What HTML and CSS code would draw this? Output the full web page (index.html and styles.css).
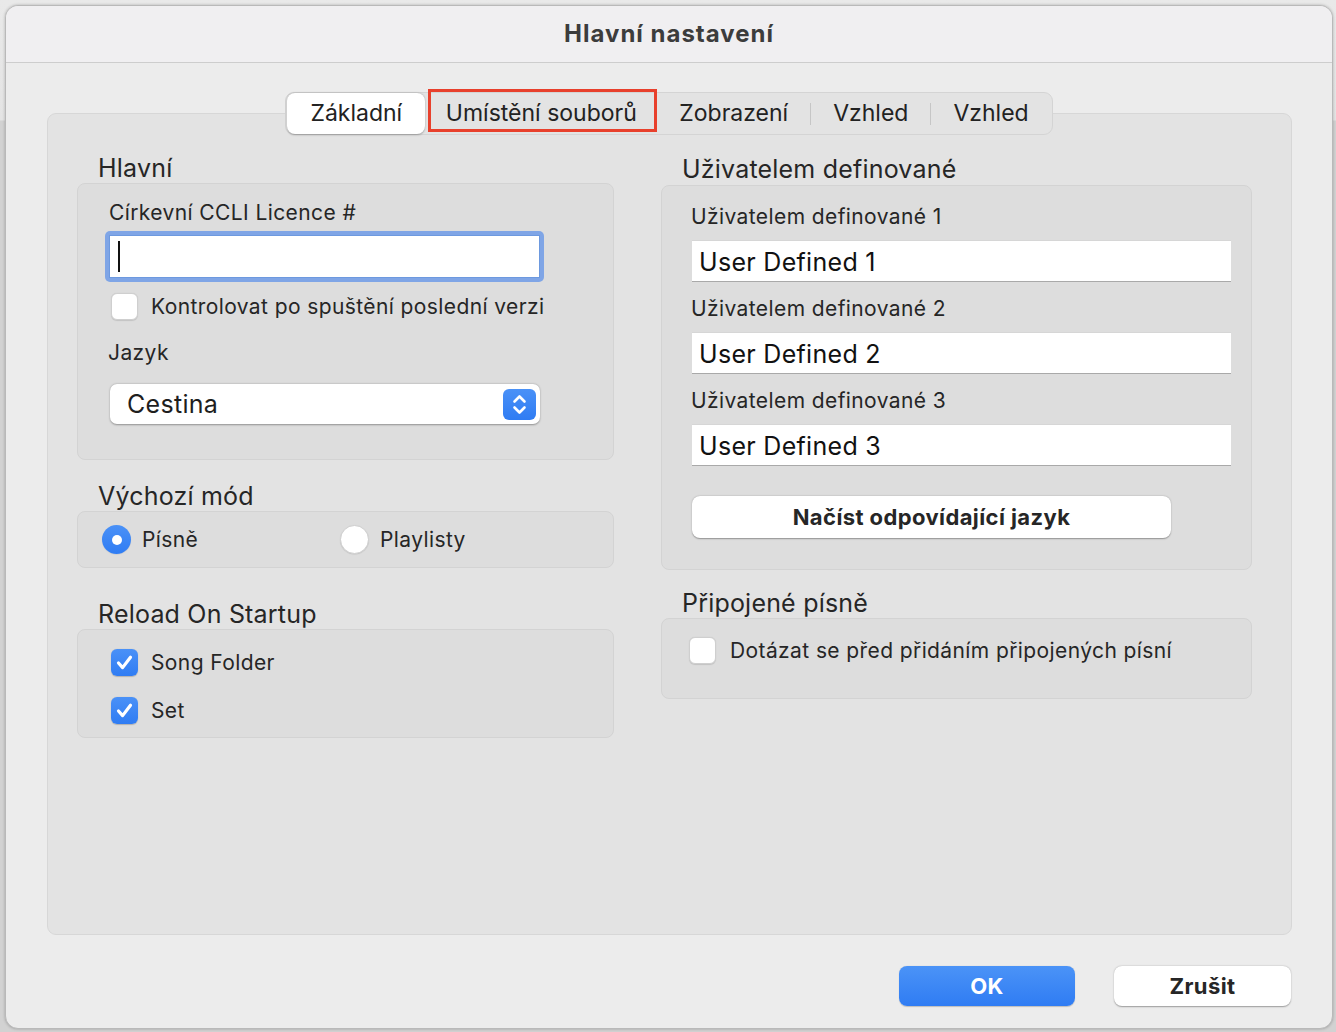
FILE: index.html
```html
<!DOCTYPE html>
<html lang="cs">
<head>
<meta charset="utf-8">
<title>Hlavní nastavení</title>
<link rel="stylesheet" href="styles.css">
</head>
<body>
<div class="window">
  <div class="titlebar">Hlavní nastavení</div>
  <div class="content">
    <div class="tabs">
      <div class="tab selected">Základní</div>
      <div class="tab marked">Umístění souborů</div>
      <div class="tab">Zobrazení</div>
      <div class="sep"></div>
      <div class="tab">Vzhled</div>
      <div class="sep"></div>
      <div class="tab">Vzhled</div>
    </div>
    <div class="tabbox">
      <div class="col col-left">
        <div class="heading">Hlavní</div>
        <div class="group group-main">
          <div class="label">Církevní CCLI Licence #</div>
          <div class="focus-field"><div class="field-inner"><span class="caret"></span></div></div>
          <div class="check-row row-version">
            <span class="checkbox"></span>
            <span class="check-label">Kontrolovat po spuštění poslední verzi</span>
          </div>
          <div class="label label-lang">Jazyk</div>
          <div class="popup">
            <span class="popup-value">Cestina</span>
            <span class="stepper">
              <svg width="33" height="31" viewBox="0 0 33 31"><path d="M11.5 12.5 L16.5 7.5 L21.5 12.5 M11.5 18.5 L16.5 23.5 L21.5 18.5" fill="none" stroke="#fff" stroke-width="2.6" stroke-linecap="round" stroke-linejoin="round"/></svg>
            </span>
          </div>
        </div>

        <div class="heading heading-mode">Výchozí mód</div>
        <div class="group group-mode">
          <div class="radio-item">
            <span class="radio on"><span class="dot"></span></span>
            <span class="check-label">Písně</span>
          </div>
          <div class="radio-item">
            <span class="radio"></span>
            <span class="check-label">Playlisty</span>
          </div>
        </div>

        <div class="heading heading-reload">Reload On Startup</div>
        <div class="group group-reload">
          <div class="check-row">
            <span class="checkbox checked"><svg width="27" height="27" viewBox="0 0 27 27"><path d="M7.5 14 L11.6 18.6 L19.5 8.2" fill="none" stroke="#fff" stroke-width="3.2" stroke-linecap="round" stroke-linejoin="round"/></svg></span>
            <span class="check-label">Song Folder</span>
          </div>
          <div class="check-row row-set">
            <span class="checkbox checked"><svg width="27" height="27" viewBox="0 0 27 27"><path d="M7.5 14 L11.6 18.6 L19.5 8.2" fill="none" stroke="#fff" stroke-width="3.2" stroke-linecap="round" stroke-linejoin="round"/></svg></span>
            <span class="check-label">Set</span>
          </div>
        </div>
      </div>

      <div class="col col-right">
        <div class="heading">Uživatelem definované</div>
        <div class="group group-user">
          <div class="label">Uživatelem definované 1</div>
          <div class="field">User Defined 1</div>
          <div class="label label-next">Uživatelem definované 2</div>
          <div class="field">User Defined 2</div>
          <div class="label label-next">Uživatelem definované 3</div>
          <div class="field">User Defined 3</div>
          <div class="button wide">Načíst odpovídající jazyk</div>
        </div>

        <div class="heading heading-linked">Připojené písně</div>
        <div class="group group-linked">
          <div class="check-row">
            <span class="checkbox"></span>
            <span class="check-label">Dotázat se před přidáním připojených písní</span>
          </div>
        </div>
      </div>
    </div>
    <div class="actions">
      <div class="button primary">OK</div>
      <div class="button">Zrušit</div>
    </div>
  </div>
</div>
</body>
</html>
```

FILE: styles.css
```css
* { box-sizing: border-box; }

html, body {
  margin: 0;
  padding: 0;
}

body {
  width: 1336px;
  height: 1032px;
  overflow: hidden;
  background: linear-gradient(to bottom, #e9e9e9 0, #e4e4e4 120px, #d2d2d2 121px, #d2d2d2 100%);
  font-family: "Inter", "Noto Sans", "Liberation Sans", sans-serif;
  color: #262626;
  padding: 5px 0 0 5px;
}

.window {
  width: 1328px;
  height: 1024px;
  background: #ececec;
  border: 1px solid #b9b9b9;
  border-radius: 13px;
  box-shadow: 0 0 3px rgba(0,0,0,0.25);
  overflow: hidden;
  display: flex;
  flex-direction: column;
}

.titlebar {
  height: 57px;
  flex: none;
  background: #f0eff1;
  border-bottom: 1px solid #cdcdcd;
  text-align: center;
  line-height: 55px;
  font-size: 24px;
  font-weight: 700;
  color: #3c3c3c;
  letter-spacing: 1px;
}

.content {
  flex: 1;
  display: flex;
  flex-direction: column;
}

/* Tabs */
.tabs {
  position: relative;
  z-index: 2;
  align-self: center;
  margin-top: 29px;
  height: 43px;
  display: flex;
  align-items: center;
  background: #e3e3e3;
  border: 1px solid #d4d4d4;
  border-radius: 9px;
  padding: 0 1px;
  font-size: 23px;
  color: #222;
  letter-spacing: 0;
}

.tab {
  height: 41px;
  line-height: 40px;
  padding: 0 22px;
  position: relative;
}

.tab.selected {
  width: 138px;
  padding: 0;
  text-align: center;
  background: #fff;
  border-radius: 8px;
  box-shadow: 0 0.5px 2px rgba(0,0,0,0.3);
}

.tab.marked {
  width: 232px;
  padding: 0;
  text-align: center;
}

.tab.marked::after {
  content: "";
  position: absolute;
  left: 3px;
  right: 0;
  top: -4px;
  bottom: 2px;
  border: 3px solid #e8402c;
}

.sep {
  width: 1px;
  height: 22px;
  background: #c6c6c6;
}

/* Tab box */
.tabbox {
  margin: -22px 40px 0 41px;
  height: 822px;
  background: #e3e3e3;
  border: 1px solid #d7d7d7;
  border-radius: 9px;
  padding: 39px 39px 0 29px;
  display: flex;
  gap: 47px;
  flex: none;
}

.col {
  display: flex;
  flex-direction: column;
}

.col-left { width: 537px; }
.col-right { width: 591px; margin-top: 1px; }

.heading {
  height: 30px;
  line-height: 30px;
  font-size: 25px;
  padding-left: 21px;
  color: #262626;
  letter-spacing: 0.2px;
}

.group {
  background: #dddddd;
  border: 1px solid #d3d3d3;
  border-radius: 8px;
}

.label {
  font-size: 21px;
  line-height: 26px;
  height: 26px;
  letter-spacing: 0.4px;
}

.check-label {
  font-size: 21px;
  line-height: 26px;
  letter-spacing: 0.4px;
}

/* Main group */
.group-main {
  height: 277px;
  padding: 16px 0 0 31px;
}

.focus-field {
  margin: 5px 0 0 -4px;
  width: 439px;
  height: 51px;
  border-radius: 5px;
  background: #7fa5e6;
  padding: 4px;
}

.field-inner {
  height: 100%;
  background: #fff;
  border: 1px solid #6d99df;
  position: relative;
}

.caret {
  position: absolute;
  left: 8px;
  top: 5px;
  width: 2px;
  height: 31px;
  background: #111;
}

.check-row {
  display: flex;
  align-items: center;
  gap: 13px;
  height: 27px;
}

.row-version {
  margin: 11px 0 0 2px;
}

.checkbox {
  width: 27px;
  height: 27px;
  flex: none;
  border-radius: 6px;
  background: #fff;
  border: 1px solid #cfcfcf;
  box-shadow: 0 0.5px 1px rgba(0,0,0,0.12);
  display: flex;
}

.checkbox.checked {
  border: none;
  background: linear-gradient(to bottom, #4a91f7, #2f7cf3);
  box-shadow: 0 0.5px 1px rgba(0,0,0,0.2);
}

.label-lang {
  margin: 20px 0 0 -1px;
}

.popup {
  margin: 18px 0 0 1px;
  width: 430px;
  height: 40px;
  background: #fff;
  border-radius: 7px;
  box-shadow: 0 0.5px 2px rgba(0,0,0,0.35);
  display: flex;
  align-items: center;
  justify-content: space-between;
  padding: 0 4px 0 17px;
}

.popup-value {
  font-size: 25px;
  letter-spacing: 0.3px;
  color: #1e1e1e;
}

.stepper {
  width: 33px;
  height: 31px;
  border-radius: 6px;
  background: linear-gradient(to bottom, #4a91f7, #2f7cf3);
  display: flex;
}

/* Mode */
.heading-mode { margin-top: 21px; }

.group-mode {
  height: 57px;
  display: grid;
  grid-template-columns: 238px 1fr;
  align-items: center;
  padding-left: 24px;
}

.radio-item {
  display: flex;
  align-items: center;
  gap: 11px;
}

.radio {
  width: 29px;
  height: 29px;
  border-radius: 50%;
  background: #fff;
  border: 1px solid #cfcfcf;
  box-shadow: 0 0.5px 1px rgba(0,0,0,0.12);
  display: flex;
  align-items: center;
  justify-content: center;
}

.radio.on {
  border: none;
  background: linear-gradient(to bottom, #4a91f7, #2f7cf3);
}

.dot {
  width: 10px;
  height: 10px;
  border-radius: 50%;
  background: #fff;
}

/* Reload */
.heading-reload { margin-top: 31px; }

.group-reload {
  height: 109px;
  padding: 19px 0 0 33px;
}

.row-set { margin-top: 21px; }

/* User defined */
.group-user {
  height: 385px;
  margin-top: 1px;
  padding: 18px 20px 0 29px;
}

.label-next { margin-top: 14px; }

.field {
  margin: 10px 0 0 1px;
  height: 42px;
  background: #fff;
  border-top: 1px solid #d6d6d6;
  border-bottom: 1px solid #a9a9a9;
  font-size: 25px;
  line-height: 42px;
  padding-left: 7px;
  color: #111;
  letter-spacing: 0.3px;
}

.button {
  height: 40px;
  background: #fff;
  border-radius: 8px;
  box-shadow: 0 0.5px 1.5px rgba(0,0,0,0.35);
  text-align: center;
  font-size: 22px;
  font-weight: 700;
  line-height: 40px;
  color: #262626;
  letter-spacing: 0.4px;
}

.button.wide {
  margin: 30px 0 0 1px;
  width: 479px;
  height: 42px;
  line-height: 42px;
}

.heading-linked { margin-top: 18px; }

.group-linked {
  height: 81px;
  padding: 18px 0 0 27px;
}

.group-linked .check-row { gap: 14px; }

/* Actions */
.actions {
  margin-top: 31px;
  display: flex;
  justify-content: flex-end;
  gap: 39px;
  padding-right: 41px;
}

.actions .button {
  width: 177px;
}

.button.primary {
  width: 176px;
  background: linear-gradient(to bottom, #4b93f7, #2f7cf3);
  color: #fff;
  box-shadow: 0 0.5px 1px rgba(0,0,0,0.2);
}
```
